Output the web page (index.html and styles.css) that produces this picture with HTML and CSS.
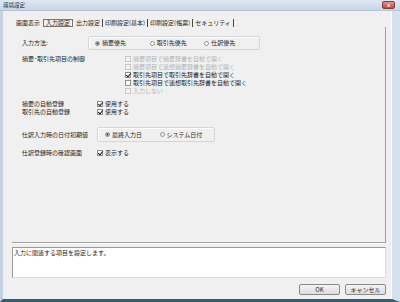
FILE: index.html
```html
<!DOCTYPE html>
<html lang="ja">
<head>
    <meta charset="utf-8">
    <title>環境設定</title>
    <link rel="stylesheet" href="styles.css">
</head>
<body>
<div class="window">
    <div class="titlebar">
        <span class="title">環境設定</span>
        <span class="close">x</span>
    </div>

    <div class="frame">
        <div class="tabs">
            <span class="tab plain">画面表示</span>
            <span class="tab active">入力設定</span>
            <span class="tab">出力設定</span>
            <span class="tab">印刷設定(基本)</span>
            <span class="tab">印刷設定(帳票)</span>
            <span class="tab">セキュリティ</span>
        </div>

        <div class="panel">
            <div class="row row-method">
                <span class="label label-group">入力方法:</span>
                <div class="group group-wide">
                    <span class="opt"><i class="radio on"></i>摘要優先</span>
                    <span class="opt"><i class="radio"></i>取引先優先</span>
                    <span class="opt"><i class="radio"></i>仕訳優先</span>
                </div>
            </div>

            <div class="row row-control">
                <span class="label label-list">摘要･取引先項目の制御</span>
                <div class="list">
                    <span class="opt off"><i class="check"></i>摘要項目で摘要辞書を自動で開く</span>
                    <span class="opt off"><i class="check"></i>摘要項目で連想摘要辞書を自動で開く</span>
                    <span class="opt"><i class="check on"></i>取引先項目で取引先辞書を自動で開く</span>
                    <span class="opt"><i class="check"></i>取引先項目で連想取引先辞書を自動で開く</span>
                    <span class="opt off"><i class="check"></i>入力しない</span>
                </div>
            </div>

            <div class="row row-auto">
                <span class="label">摘要の自動登録</span>
                <span class="opt"><i class="check on"></i>使用する</span>
            </div>
            <div class="row">
                <span class="label">取引先の自動登録</span>
                <span class="opt"><i class="check on"></i>使用する</span>
            </div>

            <div class="row row-date">
                <span class="label">仕訳入力時の日付初期値</span>
                <div class="group">
                    <span class="opt"><i class="radio on"></i>最終入力日</span>
                    <span class="opt"><i class="radio"></i>システム日付</span>
                </div>
            </div>

            <div class="row row-confirm">
                <span class="label">仕訳登録時の確認画面</span>
                <span class="opt"><i class="check on"></i>表示する</span>
            </div>
        </div>

        <div class="desc">入力に関連する項目を設定します。</div>

        <div class="buttons">
            <button class="btn">OK</button>
            <button class="btn">キャンセル</button>
        </div>
    </div>
</div>
</body>
</html>
```

FILE: styles.css
```css
* {
    box-sizing: border-box;
}
body {
    margin: 0;
    background: #f0f0f0;
    font-family: "Noto Sans CJK JP", "Noto Sans", sans-serif;
    font-size: 6px;
    line-height: 8px;
    color: #1e1e1e;
}
.window {
    width: 400px;
    height: 302px;
    display: flex;
    flex-direction: column;
    background: #f0f0f0;
}

/* title bar */
.titlebar {
    height: 11px;
    display: flex;
    align-items: center;
    justify-content: space-between;
    padding: 0 5px 0 3px;
    background: linear-gradient(#dfe8f3, #c8d7ea);
    border-bottom: 1px solid #b3c3d6;
}
.title {
    font-size: 5.5px;
    color: #222;
}
.close {
    width: 13px;
    height: 8px;
    margin-top: -1px;
    border-radius: 2px;
    border: 1px solid #8a3a30;
    background: linear-gradient(#e09a8f, #c2463a);
    color: white;
    font-family: "DejaVu Sans", sans-serif;
    font-size: 5px;
    line-height: 6px;
    font-weight: bold;
    text-align: center;
}

/* client area */
.frame {
    flex: 1;
    display: flex;
    flex-direction: column;
    padding: 8px 6px 3px 9px;
    border-left: 3px solid #c3d1e0;
    border-right: 8px solid #d5e1ee;
    border-bottom: 3px solid #2f6070;
    box-shadow: inset -1px 0 0 #fff;
}
.tabs {
    display: flex;
    height: 8px;
    margin-left: 2px;
}
.tab {
    padding: 0 2px;
    border-right: 1px solid #444;
    white-space: nowrap;
}
.tab.plain {
    border-right: none;
    padding-right: 3px;
}
.tab.active {
    border: 1px solid #777;
    line-height: 6px;
    padding: 0 2px;
    margin-right: 1px;
}

.panel {
    height: 216px;
    padding: 9px 0 0 10px;
    border-right: 1px solid #a0a0a0;
    border-bottom: 1px solid #a0a0a0;
    box-shadow: 0 1px 0 #fff;
}
.row {
    display: flex;
    align-items: center;
    height: 8px;
}
.label {
    width: 75px;
    white-space: nowrap;
}
.label-group {
    width: 66px;
}
.label-list {
    width: 103px;
}
.row-method {
    height: 14px;
}
.row-control {
    align-items: flex-start;
    height: auto;
    margin-top: 5px;
}
.row-auto {
    margin-top: 5px;
}
.row-date {
    height: 15px;
    margin-top: 11px;
}
.row-confirm {
    margin-top: 7px;
}

.group {
    display: flex;
    align-items: center;
    height: 15px;
    width: 118px;
    padding-left: 7px;
    border: 1px solid #d0d6dc;
    border-radius: 2px;
    box-shadow: inset 1px 1px 0 #fff;
}
.group-wide {
    width: 172px;
    height: 14px;
    padding-left: 6px;
}
.group .opt {
    width: 56px;
}
.list {
    display: flex;
    flex-direction: column;
}
.opt {
    display: flex;
    align-items: center;
    white-space: nowrap;
    height: 8px;
}
.opt.off {
    color: #b4b4b4;
}

.check,
.radio {
    position: relative;
    flex: none;
    width: 6px;
    height: 6px;
    margin-right: 2px;
    border: 1px solid #8e8f8f;
    background: #fff;
}
.opt.off .check {
    border-color: #c8c8c8;
    background: #f4f4f4;
}
.check.on::after {
    content: "";
    position: absolute;
    left: 1px;
    top: -1px;
    width: 2px;
    height: 4px;
    border: solid #222;
    border-width: 0 1px 1px 0;
    transform: rotate(40deg);
}
.radio {
    width: 5px;
    height: 5px;
    border-radius: 50%;
}
.radio.on::after {
    content: "";
    position: absolute;
    left: 1px;
    top: 1px;
    width: 1px;
    height: 1px;
    background: #222;
    box-shadow: 0 0 0 0.5px #333;
}

.desc {
    height: 31px;
    margin-top: 4px;
    padding: 1px 1px;
    background: #fff;
    border: 1px solid #9a9a9a;
    border-right-color: #dcdcdc;
    border-bottom-color: #dcdcdc;
}

.buttons {
    display: flex;
    justify-content: flex-end;
    gap: 5px;
    margin-top: 6px;
}
.btn {
    width: 41px;
    height: 11px;
    padding: 0;
    border: 1px solid #8a8a8a;
    border-radius: 2px;
    background: linear-gradient(#f4f4f4, #dcdcdc);
    font-family: "Noto Sans CJK JP", "Noto Sans", sans-serif;
    font-size: 6px;
    line-height: 9px;
    color: #1e1e1e;
}
```
